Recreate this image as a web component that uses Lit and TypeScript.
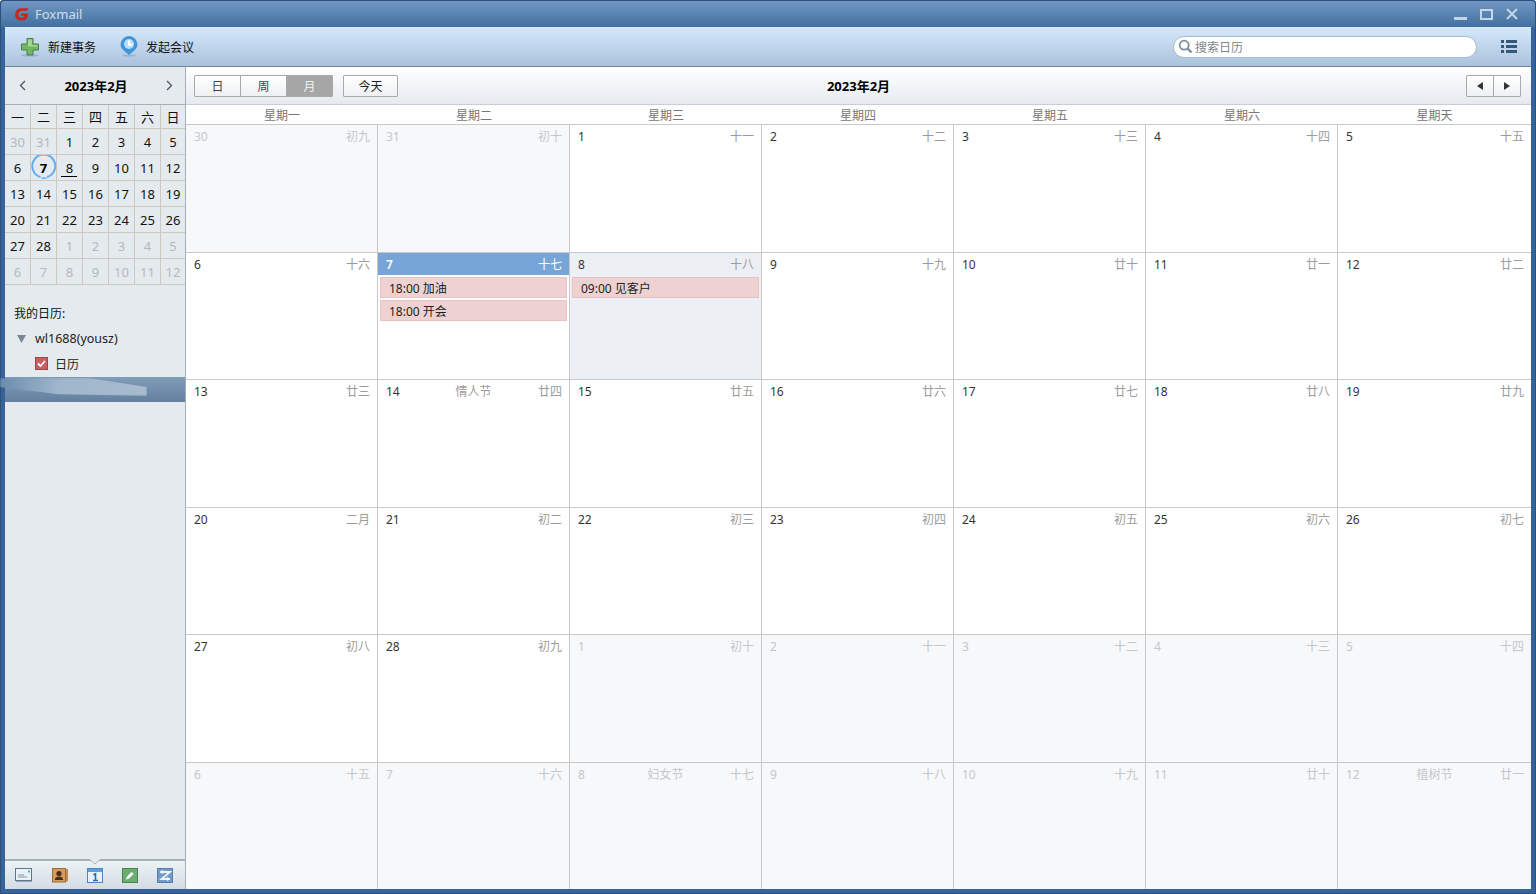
import { LitElement, html, css, svg } from 'lit';
import { customElement } from 'lit/decorators.js';
import { classMap } from 'lit/directives/class-map.js';

type Day = { n: number; l: string; other?: boolean; fest?: string; today?: boolean; sel?: boolean; ev?: string[] };

const other = (n: number, l: string, fest?: string): Day => ({ n, l, other: true, fest });

const weeks: Day[][] = [
  [other(30, '初九'), other(31, '初十'), { n: 1, l: '十一' }, { n: 2, l: '十二' }, { n: 3, l: '十三' }, { n: 4, l: '十四' }, { n: 5, l: '十五' }],
  [
    { n: 6, l: '十六' },
    { n: 7, l: '十七', today: true, ev: ['18:00 加油', '18:00 开会'] },
    { n: 8, l: '十八', sel: true, ev: ['09:00 见客户'] },
    { n: 9, l: '十九' }, { n: 10, l: '廿十' }, { n: 11, l: '廿一' }, { n: 12, l: '廿二' },
  ],
  [{ n: 13, l: '廿三' }, { n: 14, l: '廿四', fest: '情人节' }, { n: 15, l: '廿五' }, { n: 16, l: '廿六' }, { n: 17, l: '廿七' }, { n: 18, l: '廿八' }, { n: 19, l: '廿九' }],
  [{ n: 20, l: '二月' }, { n: 21, l: '初二' }, { n: 22, l: '初三' }, { n: 23, l: '初四' }, { n: 24, l: '初五' }, { n: 25, l: '初六' }, { n: 26, l: '初七' }],
  [{ n: 27, l: '初八' }, { n: 28, l: '初九' }, other(1, '初十'), other(2, '十一'), other(3, '十二'), other(4, '十三'), other(5, '十四')],
  [other(6, '十五'), other(7, '十六'), other(8, '十七', '妇女节'), other(9, '十八'), other(10, '十九'), other(11, '廿十'), other(12, '廿一', '植树节')],
];

const weekNames = ['星期一', '星期二', '星期三', '星期四', '星期五', '星期六', '星期天'];
const miniNames = ['一', '二', '三', '四', '五', '六', '日'];

const foxLogo = svg`<svg width="16" height="16" viewBox="0 0 16 16"><path d="M14.5 2.2 L7 2.2 C3.5 2.2 1.5 5 1.2 8 C.9 11.5 2.6 14.2 6 14.2 L9.5 14.2 C12 14.2 13.4 12 13.8 9.4 L14 7.4 L7.4 7.4 L6.6 9.8 L10.4 9.8 C10.2 11 9.4 11.6 8.2 11.6 L6.4 11.6 C4.8 11.6 4.2 10 4.5 8.2 C4.8 6 6 4.8 8 4.8 L13 4.8 Z" fill="#c8261c"/></svg>`;
const plusIcon = svg`<svg width="20" height="20" viewBox="0 0 20 20"><ellipse cx="10" cy="18.4" rx="9" ry="1.2" fill="#7f97ae" opacity=".5"/><path d="M7 1.5h6v5.5h5.5v6H13v5H7v-5H1.5V7H7z" fill="#73b65f" stroke="#4a7f53"/><path d="M8 2.5h4v5.500h5.500v1.500H8z" fill="#a6d68e"/></svg>`;
const pinIcon = svg`<svg width="18" height="21" viewBox="0 0 18 21"><ellipse cx="9" cy="19.500" rx="7" ry="1" fill="#7f97ae" opacity=".5"/><path d="M9 18.500 C6 15.500 1 13.500 1 8.500 a8 8 0 0 1 16 0 C17 13.500 12 15.500 9 18.500z" fill="#3c97e0" stroke="#2f7cbd" stroke-width=".6"/><circle cx="9" cy="8" r="5" fill="#b7defa"/><path d="M9 4.300v4.400h3.500" fill="none" stroke="#fff" stroke-width="2"/></svg>`;
const searchIcon = svg`<svg width="15" height="15" viewBox="0 0 15 15"><circle cx="6.200" cy="6.200" r="4.500" fill="none" stroke="#7c8d9c" stroke-width="1.800"/><path d="M9.500 9.500l4 4" stroke="#7c8d9c" stroke-width="2.400"/></svg>`;
const menuIcon = svg`<svg width="16" height="13" viewBox="0 0 16 13"><path d="M0 0h3v3H0zM5 0h11v3H5zM0 5h3v3H0zM5 5h11v3H5zM0 10h3v3H0zM5 10h11v3H5z" fill="#33587f"/></svg>`;

const mailIcon = svg`<svg width="18" height="14" viewBox="0 0 18 14"><rect x=".5" y=".5" width="16" height="12" fill="#e9f0f6" stroke="#5b7491"/><path d="M1 13.500h16" stroke="#9aa8b6"/><path d="M3 7h6M3 9h9" stroke="#7d97ae"/><rect x="13" y="2.500" width="2" height="2" fill="#5ba88b"/></svg>`;
const contactIcon = svg`<svg width="16" height="15" viewBox="0 0 16 15"><rect x=".5" y=".5" width="13" height="13.500" fill="#d69a5e" stroke="#9a6b3c"/><path d="M14 1.500h1.500v11.500H14" fill="#c28a50" stroke="#b98a58"/><circle cx="7" cy="5.500" r="2.600" fill="#4c2d17"/><path d="M2.800 12c.3-2.800 2-3.600 4.200-3.600s3.900.8 4.200 3.600z" fill="#4c2d17"/></svg>`;
const calIcon = svg`<svg width="16" height="15" viewBox="0 0 16 15"><rect x=".5" y=".5" width="15" height="14" fill="#eaf2f9" stroke="#4d86bb"/><rect x="1" y="1" width="14" height="3" fill="#5f9ed8"/><path d="M6.500 7l2-1.200v6.700M6 12.500h5" fill="none" stroke="#2d6ea6" stroke-width="1.600"/></svg>`;
const noteIcon = svg`<svg width="16" height="15" viewBox="0 0 16 15"><rect x=".5" y=".5" width="15" height="14" fill="#6cae72" stroke="#4c8150"/><path d="M4 11.500l.8-2.800 4.800-4.800 2 2-4.800 4.800z" fill="#fff"/></svg>`;
const syncIcon = svg`<svg width="16" height="15" viewBox="0 0 16 15"><rect x=".5" y=".5" width="15" height="14" fill="#729bcb" stroke="#5a7da6"/><path d="M3 4h10L4.500 11H13" fill="none" stroke="#eef4fa" stroke-width="1.800"/><path d="M6 1.800L2.800 4 6 6.200zM10 8.800L13.200 11 10 13.200z" fill="#eef4fa"/></svg>`;

@customElement('mini-cal')
class MiniCal extends LitElement {
  static styles = css`
    :host { display: block; }
    .nav { height: 37px; display: flex; align-items: center; justify-content: space-between; padding: 0 12px 0 14px; border-bottom: 1px solid #a6aeb8; }
    .nav b { font-size: 13px; color: #000; font-weight: 700; }
    .grid { display: grid; grid-template-columns: repeat(6, 26px) 24px; grid-template-rows: 24px repeat(6, 26px); }
    .c { display: flex; align-items: center; justify-content: center; border-right: 1px solid #cdc9c2; border-bottom: 1px solid #cdc9c2; font-size: 13px; color: #111; position: relative; box-sizing: border-box; }
    .c:nth-child(7n) { border-right: 0; }
    .c.off { color: #b5b8bb; }
    .c.today { font-weight: 700; color: #000; }
    .ring { position: absolute; left: 0; top: 0; }
    .mark { position: absolute; left: 4px; right: 5px; bottom: 3px; height: 1px; background: #000; }
  `;

  render() {
    const days = weeks.flat();
    return html`
      <div class="nav">
        <svg width="7" height="11" viewBox="0 0 7 11"><path d="M6 1L1.500 5.500 6 10" fill="none" stroke="#4b5661" stroke-width="1.300"/></svg>
        <b>2023年2月</b>
        <svg width="7" height="11" viewBox="0 0 7 11"><path d="M1 1l4.500 4.500L1 10" fill="none" stroke="#4b5661" stroke-width="1.300"/></svg>
      </div>
      <div class="grid">
        ${miniNames.map((m) => html`<div class="c">${m}</div>`)}
        ${days.map((d) => html`
          <div class=${classMap({ c: true, off: !!d.other, today: !!d.today })}>
            ${d.today ? svg`<svg class="ring" width="26" height="26" viewBox="0 0 26 26"><path d="M16 22.500 A11.500 11.500 0 1 0 9.500 22.500" transform="translate(0 -.5)" fill="none" stroke="#63adf4" stroke-width="2"/><path d="M10.500 23.200h5" stroke="#63adf4" stroke-width="1.500"/></svg>` : ''}
            ${d.n}
            ${d.sel ? html`<span class="mark"></span>` : ''}
          </div>
        `)}
      </div>
    `;
  }
}

@customElement('app-root')
class AppRoot extends LitElement {
  static styles = css`
    :host { display: block; width: 1536px; height: 894px; overflow: hidden; font-family: "Noto Sans", "Noto Sans CJK SC", sans-serif; font-size: 12px; color: #222; }
    .win { height: 894px; box-sizing: border-box; display: flex; flex-direction: column; background: #36639a; border-radius: 4px 4px 0 0; padding: 0 5px 5px; box-shadow: inset 0 0 0 1px #2d4f7c; }
    .title { height: 27px; flex: none; margin: 0 -5px; padding: 0 17px 0 13px; display: flex; align-items: center; background: linear-gradient(#7198c3, #41709f); border: 1px solid #2d4f7c; border-bottom: 0; border-radius: 4px 4px 0 0; box-sizing: border-box; }
    .title .name { margin-left: 5px; font-size: 13px; color: #d3deeb; }
    .winbtns { margin-left: auto; display: flex; align-items: center; gap: 13px; }
    .toolbar { height: 40px; flex: none; box-sizing: border-box; display: flex; align-items: center; padding: 0 14px 0 15px; background: linear-gradient(#d6e9fb, #aac2dc); border-bottom: 1px solid #6f8499; }
    .tool { display: flex; align-items: center; gap: 8px; margin-right: 24px; color: #111; }
    .search { margin-left: auto; width: 304px; height: 22px; box-sizing: border-box; border: 1px solid #a5bbd0; border-radius: 11px; background: #fff; display: flex; align-items: center; padding-left: 4px; gap: 2px; color: #80868d; }
    .more { margin-left: 24px; display: flex; }
    .body { flex: 1; min-height: 0; display: flex; }
    .side { width: 181px; flex: none; box-sizing: border-box; border-right: 1px solid #a6aeb8; background: #e5eaee; display: flex; flex-direction: column; }
    .mine { margin: 20px 0 0 9px; line-height: 17px; color: #111; }
    .acct { display: flex; align-items: center; height: 17px; margin: 8px 0 0 12px; gap: 9px; font-size: 12.500px; color: #222; }
    .sub { display: flex; align-items: center; height: 17px; margin: 8px 0 0 30px; gap: 7px; color: #222; }
    .chk { width: 13px; height: 13px; display: block; }
    .row { height: 25px; margin-top: 5px; background: linear-gradient(#7f9db9, #63809e); position: relative; flex: none; }
    .smear { position: absolute; left: -5px; top: 1px; width: 147px; height: 18px; background: linear-gradient(100deg, #6a8cae, #9fb6cc 40%, #a9bccf 100%); clip-path: polygon(0 0, 60% 0, 100% 50%, 100% 100%, 40% 90%, 0 50%); filter: blur(1px); }
    .dock { margin-top: auto; height: 30px; flex: none; box-sizing: border-box; border-top: 2px solid #a9b1b8; background: linear-gradient(#ecf3f7, #d3dce2); display: flex; align-items: center; justify-content: space-between; padding: 0 12px 0 10px; position: relative; }
    .dock .notch { position: absolute; left: 84px; top: -2px; }
    .main { flex: 1; min-width: 0; display: flex; flex-direction: column; background: #fff; }
    .head { height: 38px; flex: none; box-sizing: border-box; border-bottom: 1px solid #c6cdd6; background: linear-gradient(#fff, #e6eaf0); display: flex; align-items: center; padding: 0 10px 0 8px; position: relative; }
    .seg { display: flex; height: 22px; box-sizing: border-box; border: 1px solid #a9a9a9; border-radius: 1px; background: linear-gradient(#fff, #eef0f2); }
    .seg span { width: 45px; display: flex; align-items: center; justify-content: center; color: #444; border-right: 1px solid #a9a9a9; }
    .seg span:last-child { border-right: 0; }
    .seg span.on { background: #a6a6a6; color: #f0f0f0; }
    .todaybtn { margin-left: 10px; }
    .todaybtn span { width: 53px; color: #222; }
    .htitle { position: absolute; left: 0; right: 0; text-align: center; font-size: 13px; font-weight: 700; color: #000; pointer-events: none; }
    .pager { margin-left: auto; }
    .pager span { width: 26px; }
    .weekdays { height: 19px; flex: none; display: grid; grid-template-columns: repeat(6, 192px) 1fr; align-items: center; text-align: center; color: #777; }
    .weeks { flex: 1; display: grid; grid-template-columns: repeat(6, 192px) 1fr; grid-template-rows: 128px 127px 128px 127px 128px 127px; }
    .cell { box-sizing: border-box; border-top: 1px solid #c8c8c8; border-right: 1px solid #c8c8c8; min-width: 0; }
    .cell:nth-child(7n) { border-right: 0; }
    .cell.off { background: #f7f8fa; }
    .cell.sel { background: #eceff4; }
    .chead { height: 22px; padding: 0 7px 0 8px; display: flex; align-items: center; justify-content: space-between; position: relative; color: #333; }
    .lunar { color: #9c9c9c; }
    .fest { position: absolute; left: 0; right: 0; text-align: center; color: #9c9c9c; }
    .off .chead, .off .lunar, .off .fest { color: #c3c7cc; }
    .today .chead { background: #78a5d8; color: #fff; font-weight: 600; }
    .today .lunar { color: #fff; font-weight: 400; }
    .ev { height: 21px; box-sizing: border-box; margin: 2px 2px 0; padding-left: 8px; border: 1px solid #e8c2c2; background: #eed2d2; color: #222; display: flex; align-items: center; }
  `;

  render() {
    return html`
      <div class="win">
        <div class="title">
          ${foxLogo}
          <span class="name">Foxmail</span>
          <div class="winbtns">
            <svg width="13" height="12" viewBox="0 0 13 12"><rect y="9" width="13" height="3" fill="#c6d5e5"/></svg>
            <svg width="13" height="12" viewBox="0 0 13 12"><rect x="1" y="2" width="11" height="9" fill="none" stroke="#c6d5e5" stroke-width="2"/></svg>
            <svg width="12" height="12" viewBox="0 0 12 12"><path d="M1 1l10 10M11 1L1 11" stroke="#c6d5e5" stroke-width="2"/></svg>
          </div>
        </div>
        <div class="toolbar">
          <div class="tool">${plusIcon}<span>新建事务</span></div>
          <div class="tool">${pinIcon}<span>发起会议</span></div>
          <div class="search">${searchIcon}<span>搜索日历</span></div>
          <div class="more">${menuIcon}</div>
        </div>
        <div class="body">
          <div class="side">
            <mini-cal></mini-cal>
            <div class="mine">我的日历:</div>
            <div class="acct">
              <svg width="9" height="8" viewBox="0 0 9 8"><path d="M0 0h9L4.500 8z" fill="#77889a"/></svg>
              <span>wl1688(yousz)</span>
            </div>
            <div class="sub">
              <svg class="chk" viewBox="0 0 13 13"><rect x=".5" y=".5" width="12" height="12" fill="#c75f62" stroke="#98494c"/><path d="M3 6.500l2.500 2.500L10 4" fill="none" stroke="#fff" stroke-width="1.800"/></svg>
              <span>日历</span>
            </div>
            <div class="row"><div class="smear"></div></div>
            <div class="dock">
              <svg class="notch" width="12" height="6" viewBox="0 0 12 6"><path d="M0 0l6 5 6-5" fill="#e5eaee" stroke="#a9b1b8"/></svg>
              ${mailIcon}${contactIcon}${calIcon}${noteIcon}${syncIcon}
            </div>
          </div>
          <div class="main">
            <div class="head">
              <div class="seg"><span>日</span><span>周</span><span class="on">月</span></div>
              <div class="seg todaybtn"><span>今天</span></div>
              <div class="htitle">2023年2月</div>
              <div class="seg pager">
                <span><svg width="6" height="8" viewBox="0 0 6 8"><path d="M6 0v8L0 4z" fill="#333"/></svg></span>
                <span><svg width="6" height="8" viewBox="0 0 6 8"><path d="M0 0v8l6-4z" fill="#333"/></svg></span>
              </div>
            </div>
            <div class="weekdays">${weekNames.map((w) => html`<div>${w}</div>`)}</div>
            <div class="weeks">
              ${weeks.flat().map((d) => html`
                <div class=${classMap({ cell: true, off: !!d.other, today: !!d.today, sel: !!d.sel })}>
                  <div class="chead">
                    <span>${d.n}</span>
                    ${d.fest ? html`<span class="fest">${d.fest}</span>` : ''}
                    <span class="lunar">${d.l}</span>
                  </div>
                  ${(d.ev ?? []).map((e) => html`<div class="ev">${e}</div>`)}
                </div>
              `)}
            </div>
          </div>
        </div>
      </div>
    `;
  }
}
